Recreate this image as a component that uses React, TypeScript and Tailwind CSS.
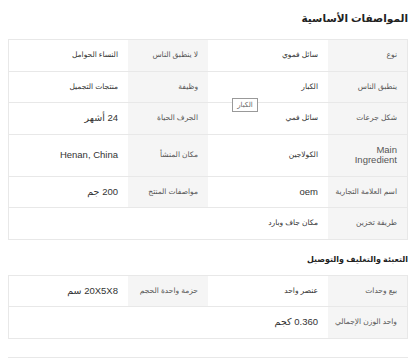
import React from 'react';

type Cell = { text: string; label?: boolean; strong?: boolean; span?: boolean; wrap?: boolean };

const basic: Cell[][] = [
    [
        { text: 'نوع', label: true },
        { text: 'سائل فموي' },
        { text: 'لا ينطبق الناس', label: true },
        { text: 'النساء الحوامل' },
    ],
    [
        { text: 'ينطبق الناس', label: true },
        { text: 'الكبار' },
        { text: 'وظيفة', label: true },
        { text: 'منتجات التجميل' },
    ],
    [
        { text: 'شكل جرعات', label: true },
        { text: 'سائل فمي' },
        { text: 'الجرف الحياة', label: true },
        { text: '24 أشهر', strong: true },
    ],
    [
        { text: 'Main Ingredient', label: true, strong: true, wrap: true },
        { text: 'الكولاجين' },
        { text: 'مكان المنشأ', label: true },
        { text: 'Henan, China', strong: true },
    ],
    [
        { text: 'اسم العلامة التجارية', label: true },
        { text: 'oem', strong: true },
        { text: 'مواصفات المنتج', label: true },
        { text: '200 جم', strong: true },
    ],
    [
        { text: 'طريقة تخزين', label: true },
        { text: 'مكان جاف وبارد', span: true },
    ],
];

const packing: Cell[][] = [
    [
        { text: 'بيع وحدات', label: true },
        { text: 'عنصر واحد' },
        { text: 'حزمة واحدة الحجم', label: true },
        { text: '20X5X8 سم', strong: true },
    ],
    [
        { text: 'واحد الوزن الإجمالي', label: true },
        { text: '0.360 كجم', strong: true, span: true },
    ],
];

const SpecTable: React.FC<{ rows: Cell[][] }> = ({ rows }) => (
    <div className="border border-[#e8e8e8]">
        {rows.map((row, i) => (
            <div
                key={i}
                className={`grid grid-cols-[79px_120px_80px_119px] ${i > 0 ? 'border-t border-[#e8e8e8]' : ''}`}
            >
                {row.map((c, j) => (
                    <div
                        key={j}
                        className={`flex items-center px-[10px] py-[10px] leading-[10.5px] ${
                            c.wrap ? '' : 'whitespace-nowrap'
                        } ${c.span ? 'col-span-3' : ''} ${c.label ? 'bg-[#f5f5f5] text-[#555]' : 'bg-white text-[#333]'} ${
                            c.strong ? 'text-[9.5px] font-medium text-[#222]' : 'text-[7.5px]'
                        }`}
                    >
                        {c.text}
                    </div>
                ))}
            </div>
        ))}
    </div>
);

export default function App() {
    return (
        <div
            dir="rtl"
            className="relative w-[416px] h-[363px] overflow-hidden bg-white px-[8px] pt-[10px] font-['Liberation_Sans','DejaVu_Sans',sans-serif]"
        >
            <h2 className="h-[16px] text-[10.5px] leading-[16px] font-bold text-[#222]">المواصفات الأساسية</h2>
            <div className="mt-[13px]">
                <SpecTable rows={basic} />
            </div>

            <h3 className="mt-[14px] h-[12px] text-[8px] leading-[12px] font-bold text-[#222]">
                التعبئة والتغليف والتوصيل
            </h3>
            <div className="mt-[9px]">
                <SpecTable rows={packing} />
            </div>

            <div className="mt-[18px] h-px bg-[#e8e8e8]" />

            {/* tooltip */}
            <div className="absolute left-[232px] top-[98px] w-[26px] h-[14px] whitespace-nowrap border border-[#999] bg-white text-[7px] leading-[12px] text-[#666] text-center">
                الكبار
            </div>
        </div>
    );
}
